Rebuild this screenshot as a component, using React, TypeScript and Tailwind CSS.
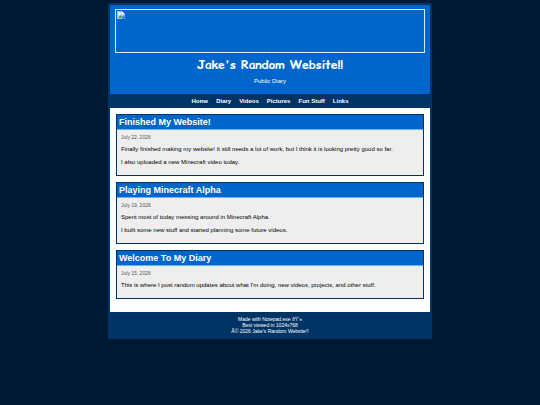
type Post = {
  title: string;
  date: string;
  lines: string[];
};

const links = ["Home", "Diary", "Videos", "Pictures", "Fun Stuff", "Links"];

const posts: Post[] = [
  {
    title: "Finished My Website!",
    date: "July 22, 2026",
    lines: [
      "Finally finished making my website! It still needs a lot of work, but I think it is looking pretty good so far.",
      "I also uploaded a new Minecraft video today.",
    ],
  },
  {
    title: "Playing Minecraft Alpha",
    date: "July 19, 2026",
    lines: [
      "Spent most of today messing around in Minecraft Alpha.",
      "I built some new stuff and started planning some future videos.",
    ],
  },
  {
    title: "Welcome To My Diary",
    date: "July 15, 2026",
    lines: [
      "This is where I post random updates about what I'm doing, new videos, projects, and other stuff.",
    ],
  },
];

function Banner() {
  return (
    <div className="h-11 border border-[#cceeff] p-px">
      <svg viewBox="0 0 16 16" className="h-2 w-2" aria-hidden="true">
        <path d="M1 1h9l5 5v9H1z" fill="#c5dcf5" stroke="#e8f1fa" />
        <path d="M10 1v5h5z" fill="#ffffff" />
        <path d="M2 14l5-6 3 3 4-4v2l-7 5z" fill="#4c9a3f" />
        <path d="M8 15l7-6v6z" fill="#0066cc" />
        <circle cx="5" cy="5" r="2" fill="#ffffff" />
      </svg>
    </div>
  );
}

function Entry({ post }: { post: Post }) {
  return (
    <article className="border border-[#003366] bg-[#eeeeee]">
      <h2 className="border-b border-[#66b3ff] bg-[#0066cc] px-0.5 text-[9px] leading-[14px] font-bold text-white">
        {post.title}
      </h2>
      <div className="px-1 pt-1 pb-[9px]">
        <p className="text-[5px] leading-[6px] text-[#555555]">{post.date}</p>
        {post.lines.map((line) => (
          <p key={line} className="mt-[6px] text-[6px] leading-[7px] text-black">
            {line}
          </p>
        ))}
      </div>
    </article>
  );
}

export default function App() {
  return (
    <div className="min-h-screen bg-[#001a33] pt-[3px] font-['Liberation_Sans',Arial,sans-serif]">
      <div className="mx-auto w-3/5 border-2 border-[#003366] bg-white">
        <header className="bg-[#0066cc] px-[5px] pt-1 pb-[9px] text-center text-white">
          <Banner />
          <h1 className="mt-[3px] font-['Comic_Relief','Comic_Neue',cursive] text-[12px] leading-[18px] font-bold">
            Jake's Random Website!!
          </h1>
          <p className="mt-1 text-[6px] leading-[7px]">Public Diary</p>
        </header>
        <nav className="flex justify-center gap-2 bg-[#003366] pt-1 pb-[3px] text-[6px] leading-[7px] font-bold text-white">
          {links.map((link) => (
            <a key={link} href="#">
              {link}
            </a>
          ))}
        </nav>
        <main className="flex flex-col gap-[6px] px-[6px] pt-[6px] pb-[13px]">
          {posts.map((post) => (
            <Entry key={post.title} post={post} />
          ))}
        </main>
        <footer className="bg-[#003366] pt-1 pb-[3px] text-center text-[5px] leading-[6px] text-white">
          <p>Made with Notepad.exe ðŸ’»</p>
          <p>Best viewed in 1024x768</p>
          <p>Â© 2026 Jake's Random Website!!</p>
        </footer>
      </div>
    </div>
  );
}
